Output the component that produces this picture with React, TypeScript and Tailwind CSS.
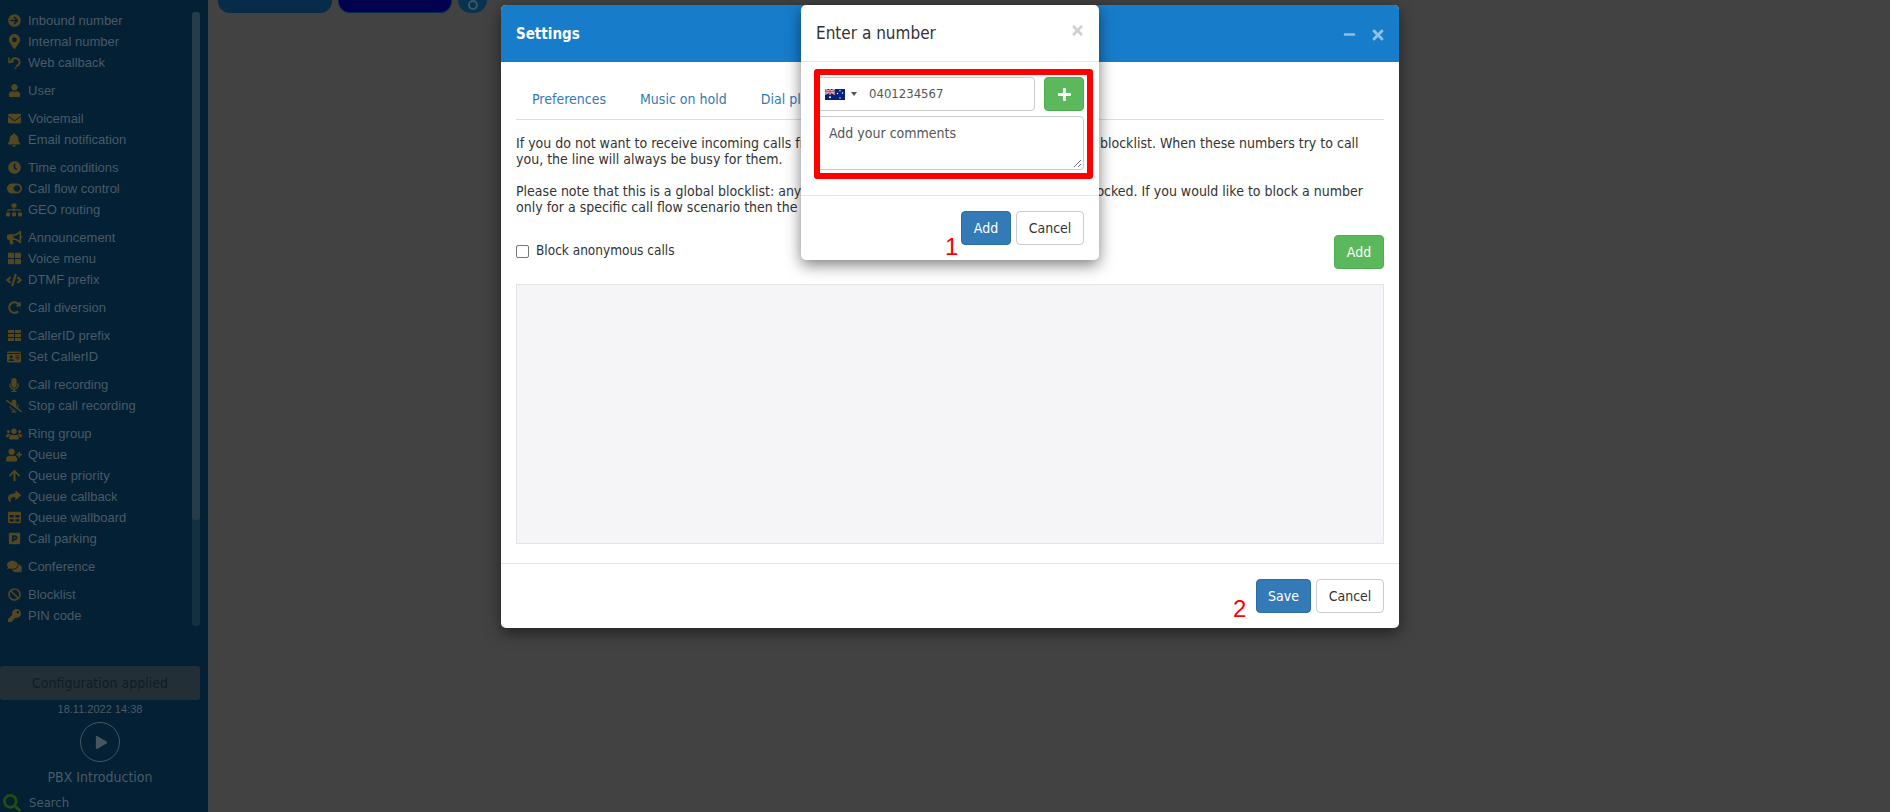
import type { ComponentType } from "react";
import {
  FaArrowCircleRight,
  FaMapMarkerAlt,
  FaUser,
  FaEnvelope,
  FaBell,
  FaClock,
  FaToggleOn,
  FaSitemap,
  FaBullhorn,
  FaThLarge,
  FaCode,
  FaRedoAlt,
  FaIdCard,
  FaMicrophone,
  FaMicrophoneSlash,
  FaUsers,
  FaUserPlus,
  FaArrowUp,
  FaShare,
  FaTable,
  FaParking,
  FaComments,
  FaBan,
  FaKey,
  FaPlay,
  FaSearch,
  FaPlus,
  FaTimes,
  FaMinus,
} from "react-icons/fa";

type NavIcon = ComponentType<{ size?: number }>;
type NavItem = { label: string; icon: NavIcon; size?: number };

function CallbackIcon({ size = 13 }: { size?: number }) {
  return (
    <svg width={size} height={size} viewBox="0 0 13 13" fill="none" stroke="currentColor" strokeWidth="2">
      <path d="M3 5.5C4 2.5 7 1.5 9.5 2.8C12 4.2 12.4 7.5 10.2 9.2C9.4 9.8 8.6 10 7.8 10" />
      <path d="M0.8 1.5L1.2 6.4L5.8 5.4" strokeWidth="1.6" />
      <rect x="6.6" y="11.2" width="1.8" height="1.6" fill="currentColor" stroke="none" />
    </svg>
  );
}

function RowsIcon({ size = 13 }: { size?: number }) {
  return (
    <svg width={size} height={size} viewBox="0 0 13 13" fill="currentColor">
      <rect x="0" y="1" width="6" height="3" />
      <rect x="7" y="1" width="6" height="3" />
      <rect x="0" y="5" width="6" height="3" />
      <rect x="7" y="5" width="6" height="3" />
      <rect x="0" y="9" width="6" height="3" />
      <rect x="7" y="9" width="6" height="3" />
    </svg>
  );
}

const NAV_GROUPS: NavItem[][] = [
  [
    { label: "Inbound number", icon: FaArrowCircleRight },
    { label: "Internal number", icon: FaMapMarkerAlt, size: 15 },
    { label: "Web callback", icon: CallbackIcon },
  ],
  [{ label: "User", icon: FaUser }],
  [
    { label: "Voicemail", icon: FaEnvelope },
    { label: "Email notification", icon: FaBell, size: 14 },
  ],
  [
    { label: "Time conditions", icon: FaClock },
    { label: "Call flow control", icon: FaToggleOn, size: 15 },
    { label: "GEO routing", icon: FaSitemap, size: 16 },
  ],
  [
    { label: "Announcement", icon: FaBullhorn, size: 15 },
    { label: "Voice menu", icon: FaThLarge },
    { label: "DTMF prefix", icon: FaCode, size: 16 },
  ],
  [{ label: "Call diversion", icon: FaRedoAlt }],
  [
    { label: "CallerID prefix", icon: RowsIcon },
    { label: "Set CallerID", icon: FaIdCard, size: 14 },
  ],
  [
    { label: "Call recording", icon: FaMicrophone, size: 14 },
    { label: "Stop call recording", icon: FaMicrophoneSlash, size: 16 },
  ],
  [
    { label: "Ring group", icon: FaUsers, size: 16 },
    { label: "Queue", icon: FaUserPlus, size: 16 },
    { label: "Queue priority", icon: FaArrowUp },
    { label: "Queue callback", icon: FaShare },
    { label: "Queue wallboard", icon: FaTable },
    { label: "Call parking", icon: FaParking },
  ],
  [{ label: "Conference", icon: FaComments, size: 15 }],
  [
    { label: "Blocklist", icon: FaBan },
    { label: "PIN code", icon: FaKey },
  ],
];

function Sidebar() {
  return (
    <aside className="w-[208px] h-[812px] shrink-0 bg-[#032035] flex flex-col overflow-hidden font-['Liberation_Sans',sans-serif]">
      <div className="h-[656px] shrink-0 pt-[10px] flex">
        <nav className="w-[192px] flex flex-col gap-[7px]">
          {NAV_GROUPS.map((group) => (
            <div key={group[0].label}>
              {group.map(({ label, icon: Icon, size }) => (
                <div key={label} className="h-[21px] flex items-center text-[13px] text-[#4a5a66]">
                  <span className="w-[28px] flex justify-center text-[#54461f]">
                    <Icon size={size ?? 13} />
                  </span>
                  {label}
                </div>
              ))}
            </div>
          ))}
        </nav>
        <div className="w-[8px] h-[614px] mt-[2px] rounded-[3px] bg-[#12303f]">
          <div className="h-[508px] rounded-[3px] bg-[#273c49]" />
        </div>
      </div>
      <div className="w-[200px] h-[34px] mt-[10px] shrink-0 rounded-[3px] bg-[#232f37] flex items-center justify-center text-[14px] text-[#101c24] font-['DejaVu_Sans_Condensed',sans-serif]">
        Configuration applied
      </div>
      <div className="w-[200px] mt-[1px] text-center text-[11px] leading-[16px] text-[#4a5a66]">18.11.2022 14:38</div>
      <div className="w-[200px] flex justify-center mt-[5px]">
        <div className="w-[40px] h-[40px] rounded-full border border-[#46555f] flex items-center justify-center text-[#46555f] pl-[2px]">
          <FaPlay size={13} />
        </div>
      </div>
      <div className="w-[200px] mt-[5px] text-center text-[14px] leading-[20px] text-[#4a5a66] font-['DejaVu_Sans_Condensed',sans-serif]">
        PBX Introduction
      </div>
      <div className="flex items-center mt-[6px] pl-[3px] gap-[8px] text-[13px] text-[#4a5a66] font-['DejaVu_Sans_Condensed',sans-serif]">
        <FaSearch size={18} className="text-[#1f4d12]" />
        Search
      </div>
    </aside>
  );
}

function FlagAU() {
  return (
    <svg width="20" height="11" viewBox="0 0 20 11" className="shrink-0">
      <rect width="20" height="11" fill="#00247d" />
      <path d="M0 0L10 5.5M10 0L0 5.5" stroke="#fff" strokeWidth="1.4" />
      <path d="M0 0L10 5.5M10 0L0 5.5" stroke="#cf142b" strokeWidth="0.6" />
      <path d="M5 0V5.5M0 2.75H10" stroke="#fff" strokeWidth="1.8" />
      <path d="M5 0V5.5M0 2.75H10" stroke="#cf142b" strokeWidth="1" />
      <circle cx="5" cy="8.3" r="1" fill="#fff" />
      <circle cx="15" cy="1.8" r="0.7" fill="#fff" />
      <circle cx="15" cy="9" r="0.7" fill="#fff" />
      <circle cx="12.5" cy="4.5" r="0.7" fill="#fff" />
      <circle cx="17.5" cy="4" r="0.7" fill="#fff" />
    </svg>
  );
}

function SettingsModal() {
  return (
    <div className="absolute left-[501px] top-[5px] w-[898px] h-[623px] bg-white rounded-[5px] shadow-[0_5px_15px_rgba(0,0,0,0.5)] flex flex-col overflow-hidden">
      <div className="h-[57px] shrink-0 bg-[#177dcb] px-[15px] pt-[2px] flex items-center justify-between">
        <span className="text-[15px] font-bold text-white">Settings</span>
        <div className="flex items-center gap-[14px] -mr-[2px] text-[#8cc0e6]">
          <FaMinus size={13} />
          <FaTimes size={16} />
        </div>
      </div>
      <div className="px-[15px] flex-1">
        <div className="h-[58px] border-b border-[#ddd] flex items-end gap-[34px] px-[16px] pb-[11px] text-[14px] leading-[18px] text-[#337ab7]">
          <span>Preferences</span>
          <span>Music on hold</span>
          <span>Dial plan</span>
        </div>
        <div className="text-[14px] leading-[16px] text-[#333] mt-[15px]">
          <p>
            If you do not want to receive incoming calls from certain numbers, you can add them to the blocklist. When these numbers try to call
            <br />
            you, the line will always be busy for them.
          </p>
          <p className="mt-[16px]">
            Please note that this is a global blocklist: any call from numbers on this list will always be blocked. If you would like to block a number
            <br />
            only for a specific call flow scenario then the
          </p>
        </div>
        <div className="flex items-center justify-between mt-[20px]">
          <label className="flex items-center gap-[7px] text-[13.5px] text-[#333] -mt-[3px]">
            <span className="w-[13px] h-[13px] mt-[2px] rounded-[2px] border border-[#767676] bg-white" />
            Block anonymous calls
          </label>
          <button className="w-[50px] h-[34px] rounded-[4px] border border-[#4cae4c] bg-[#5cb85c] text-[14px] text-white">Add</button>
        </div>
        <div className="h-[260px] mt-[15px] bg-[#f5f5f7] border border-[#e3e3e3]" />
      </div>
      <div className="h-[65px] shrink-0 border-t border-[#e5e5e5] px-[15px] flex items-center justify-end gap-[5px]">
        <button className="w-[55px] h-[34px] rounded-[4px] border border-[#2e6da4] bg-[#337ab7] text-[14px] text-white">Save</button>
        <button className="w-[68px] h-[34px] rounded-[4px] border border-[#ccc] bg-white text-[14px] text-[#333]">Cancel</button>
      </div>
    </div>
  );
}

function NumberModal() {
  return (
    <div className="absolute left-[801px] top-[5px] w-[298px] h-[255px] bg-white rounded-[5px] shadow-[0_5px_15px_rgba(0,0,0,0.5)] flex flex-col overflow-hidden">
      <div className="h-[57px] shrink-0 border-b border-[#e5e5e5] px-[15px] pt-[2px] flex items-center justify-between">
        <span className="text-[17px] text-[#333]">Enter a number</span>
        <FaTimes size={15} className="text-[#d0d0d0] -mt-[7px] -mr-[1px]" />
      </div>
      <div className="h-[133px] shrink-0 px-[15px] pt-[15px]">
        <div className="flex gap-[9px]">
          <div className="flex-1 h-[34px] rounded-[4px] border border-[#ccc] flex items-center pl-[8px] text-[13px] text-[#555]">
            <FlagAU />
            <span className="w-0 h-0 ml-[6px] border-x-[3px] border-x-transparent border-t-[4px] border-t-[#555]" />
            <span className="ml-[12px]">0401234567</span>
          </div>
          <button className="w-[40px] h-[34px] rounded-[4px] border border-[#4cae4c] bg-[#5cb85c] flex items-center justify-center text-white">
            <FaPlus size={15} />
          </button>
        </div>
        <div className="relative h-[54px] mt-[5px] rounded-[4px] border border-[#ccc] px-[12px] py-[7px] text-[14px] leading-[18px] text-[#555]">
          Add your comments
          <svg width="9" height="9" viewBox="0 0 9 9" className="absolute right-[1px] bottom-[1px]">
            <path d="M1 8L8 1M5 8L8 5" stroke="#777" strokeWidth="1" />
          </svg>
        </div>
      </div>
      <div className="flex-1 border-t border-[#e5e5e5] px-[15px] flex items-center justify-end gap-[5px]">
        <button className="w-[50px] h-[34px] rounded-[4px] border border-[#2e6da4] bg-[#337ab7] text-[14px] text-white">Add</button>
        <button className="w-[68px] h-[34px] rounded-[4px] border border-[#ccc] bg-white text-[14px] text-[#333]">Cancel</button>
      </div>
    </div>
  );
}

export default function App() {
  return (
    <div className="relative w-[1890px] h-[812px] overflow-hidden bg-[#424242] flex font-['DejaVu_Sans_Condensed','DejaVu_Sans',sans-serif]">
      <Sidebar />
      <main className="flex-1 flex gap-[6px] pl-[10px] items-start text-[14px] leading-[16px] text-[#3f5564]">
        <div className="w-[114px] h-[13px] rounded-b-[12px] bg-[#062c47] flex items-end justify-center overflow-hidden pb-[10px]">
          <span className="shrink-0">Tab 2</span>
        </div>
        <div className="w-[114px] h-[13px] rounded-b-[12px] bg-[#00004f] border-b border-x border-[#032c4d] flex items-end justify-center overflow-hidden pb-[10px]">
          <span className="shrink-0">Tab 3</span>
        </div>
        <div className="w-[29px] h-[13px] rounded-b-full bg-[#083350] flex items-end justify-center overflow-hidden">
          <span className="w-[10px] h-[10px] mb-[3px] rounded-full border-2 border-[#3f5564] shrink-0" />
        </div>
      </main>

      <SettingsModal />
      <NumberModal />

      {/* red annotations drawn on top of the screenshot */}
      <div className="absolute left-[814px] top-[69px] w-[279px] h-[110px] rounded-[3px] border-[6px] border-[#ff0000]" />
      <span className="absolute left-[945px] top-[233px] text-[24px] leading-[28px] text-[#ff0000] font-['Liberation_Sans',sans-serif]">1</span>
      <span className="absolute left-[1233px] top-[595px] text-[24px] leading-[28px] text-[#ff0000] font-['Liberation_Sans',sans-serif]">2</span>
    </div>
  );
}
